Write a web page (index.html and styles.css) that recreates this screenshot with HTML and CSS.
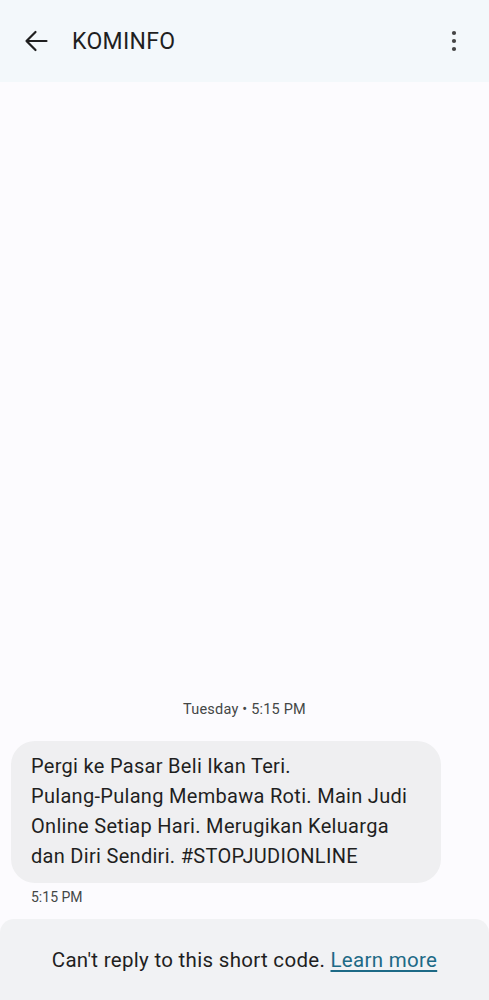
FILE: index.html
```html
<!DOCTYPE html>
<html>
<head>
<meta charset="utf-8">
<link rel="stylesheet" href="styles.css">
</head>
<body>
<div class="app">
  <header class="topbar">
    <svg class="back" width="24" height="24" viewBox="0 0 24 24"><path d="M22.5 12H2.5M11.5 3L2.5 12l9 9" fill="none" stroke="#1f1f1f" stroke-width="2.2" stroke-linecap="round" stroke-linejoin="round"/></svg>
    <div class="title">KOMINFO</div>
    <svg class="more" width="24" height="24" viewBox="0 0 24 24"><circle cx="12" cy="4" r="2.1" fill="#444"/><circle cx="12" cy="12" r="2.1" fill="#444"/><circle cx="12" cy="20" r="2.1" fill="#444"/></svg>
  </header>
  <main class="thread">
    <div class="stamp">Tuesday • 5:15 PM</div>
    <div class="bubble">Pergi ke Pasar Beli Ikan Teri.<br>Pulang-Pulang Membawa Roti. Main Judi Online Setiap Hari. Merugikan Keluarga dan Diri Sendiri. #STOPJUDIONLINE</div>
    <div class="time">5:15 PM</div>
  </main>
  <footer class="bottom">
    <span>Can't reply to this short code. <a class="link" href="#">Learn more</a></span>
  </footer>
</div>
</body>
</html>
```

FILE: styles.css
```css
html, body { margin: 0; padding: 0; }
body { font-family: Roboto, "Noto Sans", sans-serif; background: #fcfbfe; color: #1f1f1f; }
.app { width: 489px; height: 1000px; display: flex; flex-direction: column; overflow: hidden; }
.topbar { height: 82px; background: #f3f8fb; display: flex; align-items: center; flex-shrink: 0; padding: 0 23px 0 24px; box-sizing: border-box; }
.back { flex-shrink: 0; }
.title { font-size: 23px; margin-left: 24px; flex: 1; letter-spacing: 0.3px; color: #1f1f1f; }
.more { flex-shrink: 0; }
.thread { flex: 1; display: flex; flex-direction: column; justify-content: flex-end; padding: 0 0 14px 11px; }
.stamp { text-align: center; font-size: 14.5px; letter-spacing: 0.2px; color: #444746; margin-bottom: 23px; margin-left: -11px; }
.bubble { width: 430px; box-sizing: border-box; background: #efeff1; border-radius: 24px; padding: 10px 20px 12px 20px; font-size: 20px; letter-spacing: 0.3px; line-height: 30px; color: #1f1f1f; }
.time { font-size: 14px; color: #444746; margin: 6px 0 0 20px; }
.bottom { height: 81px; flex-shrink: 0; background: #f1f2f4; border-radius: 14px 14px 0 0; display: flex; align-items: center; justify-content: center; font-size: 20.5px; letter-spacing: 0.3px; color: #1f1f1f; }
.link { color: #1d6a86; text-decoration: underline; text-underline-offset: 3px; }
```
